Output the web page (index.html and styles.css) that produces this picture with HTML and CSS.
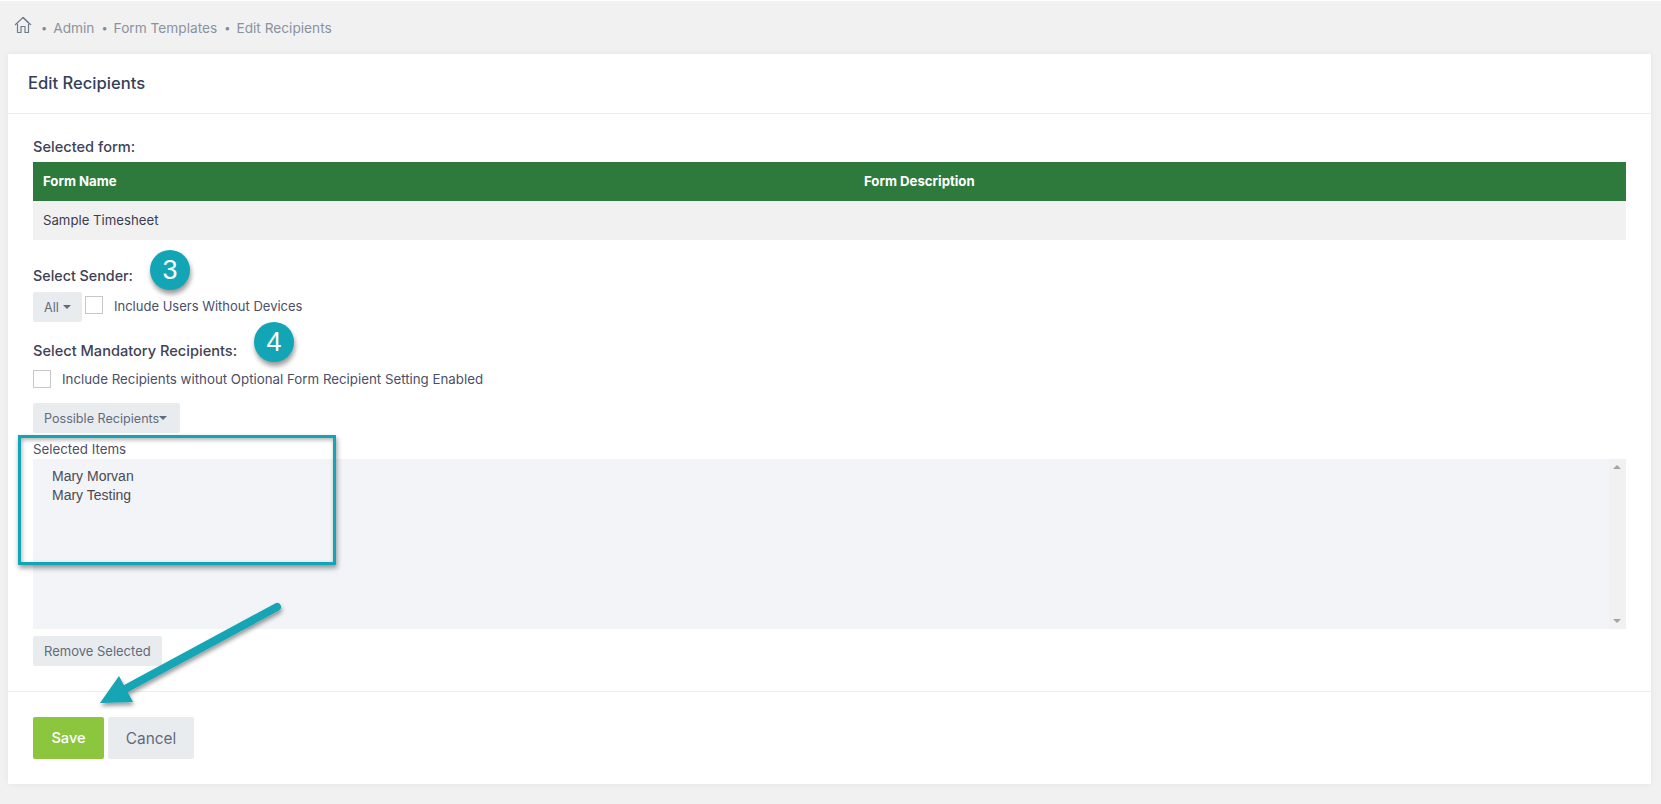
FILE: index.html
```html
<!DOCTYPE html>
<html lang="en">
<head>
<meta charset="utf-8">
<title>Edit Recipients</title>
<link rel="stylesheet" href="styles.css">
</head>
<body>
<nav class="crumbs">
  <svg class="home" width="18" height="18" viewBox="0 0 18 18" fill="none" stroke="#6f7c8e" stroke-width="1.2" stroke-linejoin="round"><path d="M1 9 9 1.5 17 9"/><path d="M3.5 7.5V16.5H7V10.5H11V16.5H14.5V7.5"/><path d="M9 1.5 14.5 6.7"/></svg>
  <span class="dot">•</span><span>Admin</span><span class="dot">•</span><span>Form Templates</span><span class="dot">•</span><span>Edit Recipients</span>
</nav>
<main class="card">
  <header class="card-head">Edit Recipients</header>
  <section class="card-body">
    <div class="label first">Selected form:</div>
    <div class="table">
      <div class="thead"><div class="col-a">Form Name</div><div>Form Description</div></div>
      <div class="trow">Sample Timesheet</div>
    </div>
    <div class="label sender">Select Sender:</div>
    <div class="line">
      <button class="btn all">All<i class="caret"></i></button>
      <span class="box"></span>
      <span class="opt">Include Users Without Devices</span>
    </div>
    <div class="label mand">Select Mandatory Recipients:</div>
    <div class="line check2">
      <span class="box nomargin"></span>
      <span class="opt wide">Include Recipients without Optional Form Recipient Setting Enabled</span>
    </div>
    <button class="btn possible">Possible Recipients<i class="caret tight"></i></button>
    <div class="items-label">Selected Items</div>
    <div class="listbox">
      <div class="names"><div>Mary Morvan</div><div>Mary Testing</div></div>
      <div class="scroll"><i class="up"></i><i class="down"></i></div>
    </div>
    <button class="btn remove">Remove Selected</button>
  </section>
  <footer class="card-foot">
    <button class="big save">Save</button>
    <button class="big cancel">Cancel</button>
  </footer>
</main>
<div class="badge b3">3</div>
<div class="badge b4">4</div>
<div class="callout"></div>
<svg class="arrow" width="200" height="120" viewBox="0 0 200 120">
  <defs><filter id="sh" x="-20%" y="-20%" width="140%" height="140%"><feDropShadow dx="1" dy="3" stdDeviation="2" flood-color="#000" flood-opacity=".4"/></filter></defs>
  <g filter="url(#sh)" fill="#12a5b5" stroke="none">
    <path d="M190 11 40 92" stroke="#12a5b5" stroke-width="8" stroke-linecap="round" fill="none"/>
    <path d="M13 107 32 80 46 106Z"/>
  </g>
</svg>
</body>
</html>
```
FILE: styles.css
```css
* { box-sizing: border-box; }
html, body { margin: 0; height: 804px; overflow: hidden; }
body { background: #f1f1f1; font-family: Inter, "Open Sans", sans-serif; color: #3f4254; border-top: 1px solid #fff; position: relative; }
.crumbs { height: 53px; padding: 0 14px; display: flex; align-items: center; gap: 7px; font-size: 13.7px; color: #8a92a0; }
.home { margin-top: -5px; margin-right: 2px; }
.dot { font-size: 11px; color: #7f8a99; margin-right: -1px; }
.card { margin: 0 10px 0 8px; height: 730px; background: #fff; box-shadow: 0 0 6px rgba(0,0,0,.06); display: flex; flex-direction: column; }
.card-head { height: 60px; border-bottom: 1px solid #ebedf2; padding: 0 20px 2px; display: flex; align-items: center; font-size: 16.6px; font-weight: 500; color: #34405a; }
.card-body { padding: 0 25px; height: 578px; border-bottom: 1px solid #ebedf2; display: flex; flex-direction: column; align-items: flex-start; }
.label { font-size: 14.6px; font-weight: 500; line-height: 18px; color: #3f4254; }
.first { margin-top: 24px; }
.sender { font-size: 14.3px; }
.table { width: 100%; margin-top: 6px; font-size: 13.2px; }
.thead { height: 39px; background: #2e7a3d; color: #fff; font-weight: 700; display: flex; align-items: center; padding: 0 10px 2px; }
.col-a { width: 821px; }
.trow { height: 39px; background: #f1f1f1; display: flex; align-items: center; padding: 0 10px 2px; color: #3a3d50; }
.sender { margin-top: 27px; }
.line { display: flex; align-items: center; }
.sender + .line { margin-top: 7px; height: 30px; }
.btn { border: 0; border-radius: 2px; background: #e9ecef; color: #5f6b7c; font: 400 12.6px Inter, "Open Sans", sans-serif; height: 30px; padding: 0 11px; display: inline-flex; align-items: center; }
.all { width: 49px; }
.possible { padding-right: 13px; }
.remove { font-size: 13px; }
.caret { width: 0; height: 0; border: 4px solid transparent; border-top-color: #5f6b7c; border-bottom: 0; margin-left: 4px; }
.caret.tight { margin-left: 0; }
.box { width: 18px; height: 18px; background: #fff; border: 1px solid #c5c7cb; margin: -5px 11px 0 3px; flex: none; }
.box.nomargin { margin: 0 11px 0 0; }
.opt { font-size: 13px; color: #4b4f68; padding-bottom: 3px; }
.opt.wide { font-size: 13.3px; padding-bottom: 1px; }
.mand { margin-top: 20px; }
.check2 { margin-top: 10px; height: 18px; }
.possible { margin-top: 15px; }
.items-label { font-size: 13.3px; line-height: 18px; margin-top: 8px; padding-bottom: 1px; height: 18px; line-height: 16px; color: #4b4f68; }
.listbox { width: 100%; height: 170px; background: #f3f4f8; display: flex; justify-content: space-between; flex: none; }
.names { padding: 8px 19px; font: 14px/19px "Liberation Sans", Arial, sans-serif; color: #4a4a52; }
.scroll { width: 17px; background: #f1f1f1; position: relative; }
.up, .down { position: absolute; left: 4px; width: 0; height: 0; border: 4px solid transparent; }
.up { top: 6px; border-top: 0; border-bottom: 4px solid #a3a3a3; }
.down { bottom: 6px; border-bottom: 0; border-top: 4px solid #a3a3a3; }
.remove { margin-top: 7px; }
.card-foot { padding: 25px 25px 0; display: flex; gap: 4px; }
.big { height: 42px; border: 0; border-radius: 2px; font: 500 14.6px Inter, "Open Sans", sans-serif; }
.save { width: 71px; background: #8cc63f; color: #fff; }
.cancel { width: 86px; background: #e9ecef; color: #5f6b7c; font-weight: 400; font-size: 15.4px; }
.badge { position: absolute; width: 40px; height: 40px; border-radius: 50%; background: #12a5b5; color: #fff; font: 27px/40px "Liberation Sans", Arial, sans-serif; text-align: center; box-shadow: 1px 4px 5px rgba(0,0,0,.4); }
.b3 { left: 150px; top: 249px; }
.b4 { left: 254px; top: 321px; }
.callout { position: absolute; left: 18px; top: 434px; width: 318px; height: 130px; border: 3px solid #12a5b5; box-shadow: 1px 3px 5px rgba(0,0,0,.4), inset 1px 2px 4px rgba(0,0,0,.3); }
.arrow { position: absolute; left: 87px; top: 595px; }
```
